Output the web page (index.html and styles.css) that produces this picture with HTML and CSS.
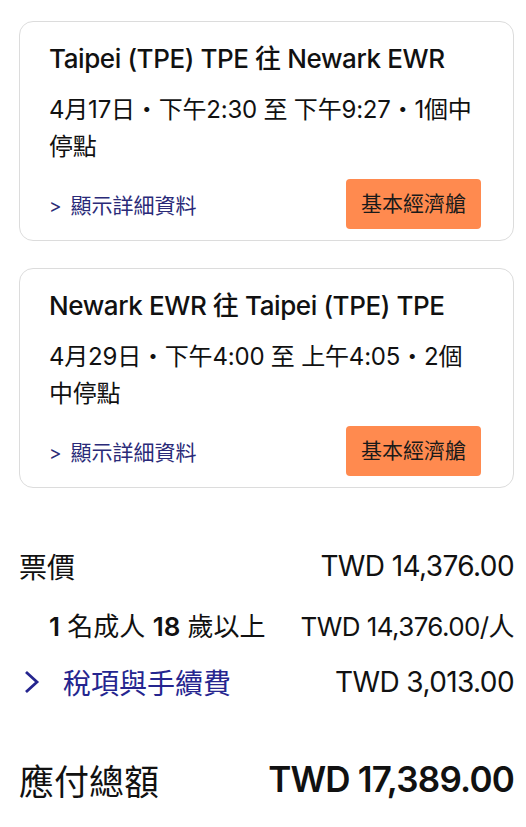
FILE: index.html
```html
<!DOCTYPE html>
<html lang="zh-Hant">
<head>
    <meta charset="UTF-8">
    <meta name="viewport" content="width=device-width, initial-scale=1.0">
    <title>行程摘要</title>
    <link rel="stylesheet" href="styles.css">
</head>
<body>
    <div class="page">

        <!-- Outbound flight -->
        <div class="flight-card">
            <h2 class="route">Taipei (TPE) TPE 往 Newark EWR</h2>
            <p class="times">4月17日・下午2:30 至 下午9:27・1個中停點</p>
            <div class="card-footer">
                <a class="details-link" href="#"><span class="chev">&gt;</span> 顯示詳細資料</a>
                <span class="fare-badge">基本經濟艙</span>
            </div>
        </div>

        <!-- Return flight -->
        <div class="flight-card">
            <h2 class="route">Newark EWR 往 Taipei (TPE) TPE</h2>
            <p class="times">4月29日・下午4:00 至 上午4:05・2個中停點</p>
            <div class="card-footer">
                <a class="details-link" href="#"><span class="chev">&gt;</span> 顯示詳細資料</a>
                <span class="fare-badge">基本經濟艙</span>
            </div>
        </div>

        <!-- Price summary -->
        <div class="price-summary">
            <div class="price-row">
                <span>票價</span>
                <span class="amount">TWD 14,376.00</span>
            </div>
            <div class="price-row sub">
                <span><b>1</b> 名成人 <b>18</b> 歲以上</span>
                <span class="amount">TWD 14,376.00/人</span>
            </div>
            <div class="price-row">
                <a class="taxes-link" href="#">
                    <svg width="18" height="28" viewBox="0 0 18 28"><path d="M3 4 L14 14 L3 24" fill="none" stroke="#25258f" stroke-width="2.8"/></svg>
                    稅項與手續費
                </a>
                <span class="amount">TWD 3,013.00</span>
            </div>
        </div>

        <div class="total-row">
            <span class="total-label">應付總額</span>
            <span class="total-amount">TWD 17,389.00</span>
        </div>
    </div>
</body>
</html>
```

FILE: styles.css
```css
body {
    margin: 0;
    background: #ffffff;
    color: #111111;
    font-family: "Inter", "Noto Sans CJK TC", sans-serif;
}

.page {
    padding: 21px 12px 0 19px;
}

.flight-card {
    border: 1px solid #dcdcdc;
    border-radius: 14px;
    padding: 20px 30px 11px 29px;
    margin-bottom: 27px;
}

.route {
    margin: 0;
    font-size: 26px;
    font-weight: 500;
    line-height: 34px;
    letter-spacing: -0.4px;
}

.times {
    margin: 15px 0 0 0;
    font-size: 24px;
    line-height: 37px;
    letter-spacing: -0.2px;
}

.card-footer {
    display: flex;
    justify-content: space-between;
    align-items: center;
    margin-top: 14px;
}

.details-link {
    color: #2a2a78;
    text-decoration: none;
    font-size: 21px;
}

.details-link .chev {
    font-size: 19px;
    margin-right: 3px;
}

.fare-badge {
    background: #ff8a4f;
    color: #1a1a1a;
    border-radius: 4px;
    font-size: 21px;
    line-height: 30px;
    padding: 10px 15px;
    margin-right: 2px;
}

.price-summary {
    margin-top: 49px;
}

.price-row {
    display: flex;
    justify-content: space-between;
    align-items: center;
    font-size: 28px;
    height: 58px;
}

.price-row .amount {
    letter-spacing: -0.6px;
}

.price-row.sub {
    font-size: 26px;
    padding-left: 30px;
}

.price-row.sub b {
    font-weight: 600;
}

.taxes-link {
    color: #25258f;
    text-decoration: none;
    display: flex;
    align-items: center;
    gap: 22px;
    padding-left: 4px;
}

.total-row {
    display: flex;
    justify-content: space-between;
    align-items: center;
    height: 44px;
    margin-top: 46px;
}

.total-label {
    font-size: 35px;
}

.total-amount {
    font-size: 35px;
    font-weight: 600;
    letter-spacing: -0.8px;
}
```
